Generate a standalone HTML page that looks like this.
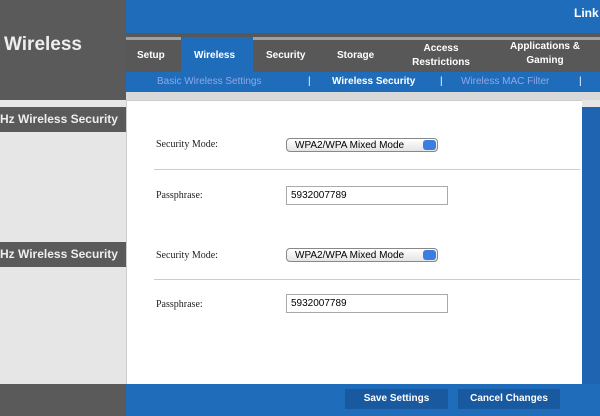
<!DOCTYPE html><html><head><style>
body{margin:0;width:600px;height:416px;overflow:hidden;background:#e6e6e6;font-family:"Liberation Sans",sans-serif;position:relative}
div{position:absolute;box-sizing:border-box}
.b{font-weight:bold}
.s{font-family:"Liberation Serif",serif;font-size:10px;color:#222}
.sel{border:1px solid #888;border-radius:4px;background:linear-gradient(#fff,#e4e4e4);font-size:10px;padding:1px 8px;height:14px}
.arr{position:absolute;right:1px;top:1px;width:13px;height:10px;background:#3c7ee0;border-radius:3px}
.inp{border:1px solid #aaa;background:#fff;font-size:10px;padding:3px 4px;height:19px;width:162px}
.lab{background:#5a5a5a;color:#eee;font-size:12px;font-weight:bold;padding:5px 0 0 0;height:25px;width:126px}
</style></head><body>
<div style="left:0;top:0;width:126px;height:100px;background:#5a5a5a"></div>
<div style="left:4px;top:34px;color:#eee;font-size:19px" class="b">Wireless</div>
<div style="left:126px;top:0;width:474px;height:33px;background:#1f6dba"></div>
<div style="left:574px;top:6px;color:#fff;font-size:12px" class="b">Link</div>
<div style="left:126px;top:33px;width:474px;height:39px;background:#585858"></div>
<div style="left:126px;top:37px;width:474px;height:3px;background:#a0a0a0"></div>
<div style="left:181px;top:37px;width:72px;height:35px;background:#1f6dba"></div>
<div style="left:126px;top:72px;width:474px;height:20px;background:#1f6dba"></div>
<div style="left:126px;top:92px;width:474px;height:8px;background:#d9d9d9"></div>
<div class="b" style="left:137px;top:50px;color:#fff;font-size:10px">Setup</div>
<div class="b" style="left:194px;top:50px;color:#fff;font-size:10px">Wireless</div>
<div class="b" style="left:266px;top:50px;color:#fff;font-size:10px">Security</div>
<div class="b" style="left:337px;top:50px;color:#fff;font-size:10px">Storage</div>
<div class="b" style="left:408px;top:42px;width:66px;color:#fff;font-size:10px;text-align:center;line-height:14px">Access<br>Restrictions</div>
<div class="b" style="left:500px;top:40px;width:90px;color:#fff;font-size:10px;text-align:center;line-height:14px">Applications &amp;<br>Gaming</div>
<div style="left:157px;top:76px;color:#8fa8e8;font-size:10px">Basic Wireless Settings</div>
<div style="left:308px;top:76px;color:#fff;font-size:10px">|</div>
<div class="b" style="left:332px;top:76px;color:#fff;font-size:10px">Wireless Security</div>
<div style="left:440px;top:76px;color:#fff;font-size:10px">|</div>
<div style="left:461px;top:76px;color:#8fa8e8;font-size:10px">Wireless MAC Filter</div>
<div style="left:579px;top:76px;color:#fff;font-size:10px">|</div>
<div style="left:126px;top:100px;width:456px;height:284px;background:#fff;border-left:1px solid #ccc;border-top:1px solid #ccc"></div>
<div style="left:582px;top:107px;width:18px;height:277px;background:#1f64b0"></div>
<div class="lab" style="left:0;top:107px">Hz Wireless Security</div>
<div class="lab" style="left:0;top:242px">Hz Wireless Security</div>
<div class="s" style="left:156px;top:139px">Security Mode:</div>
<div class="sel" style="left:286px;top:138px;width:152px">WPA2/WPA Mixed Mode<span class="arr"></span></div>
<div style="left:154px;top:169px;width:426px;height:1px;background:#c8c8ee"></div>
<div class="s" style="left:156px;top:190px">Passphrase:</div>
<div class="inp" style="left:286px;top:186px">5932007789</div>
<div class="s" style="left:156px;top:250px">Security Mode:</div>
<div class="sel" style="left:286px;top:248px;width:152px">WPA2/WPA Mixed Mode<span class="arr"></span></div>
<div style="left:154px;top:279px;width:426px;height:1px;background:#c8c8ee"></div>
<div class="s" style="left:156px;top:299px">Passphrase:</div>
<div class="inp" style="left:286px;top:294px">5932007789</div>
<div style="left:0;top:384px;width:126px;height:32px;background:#5a5a5a"></div>
<div style="left:126px;top:384px;width:474px;height:32px;background:#1f6dba"></div>
<div class="b" style="left:345px;top:389px;width:103px;height:20px;background:#19599f;color:#fff;font-size:10px;text-align:center;line-height:20px">Save Settings</div>
<div class="b" style="left:458px;top:389px;width:102px;height:20px;background:#19599f;color:#fff;font-size:10px;text-align:center;line-height:20px">Cancel Changes</div>
</body></html>
